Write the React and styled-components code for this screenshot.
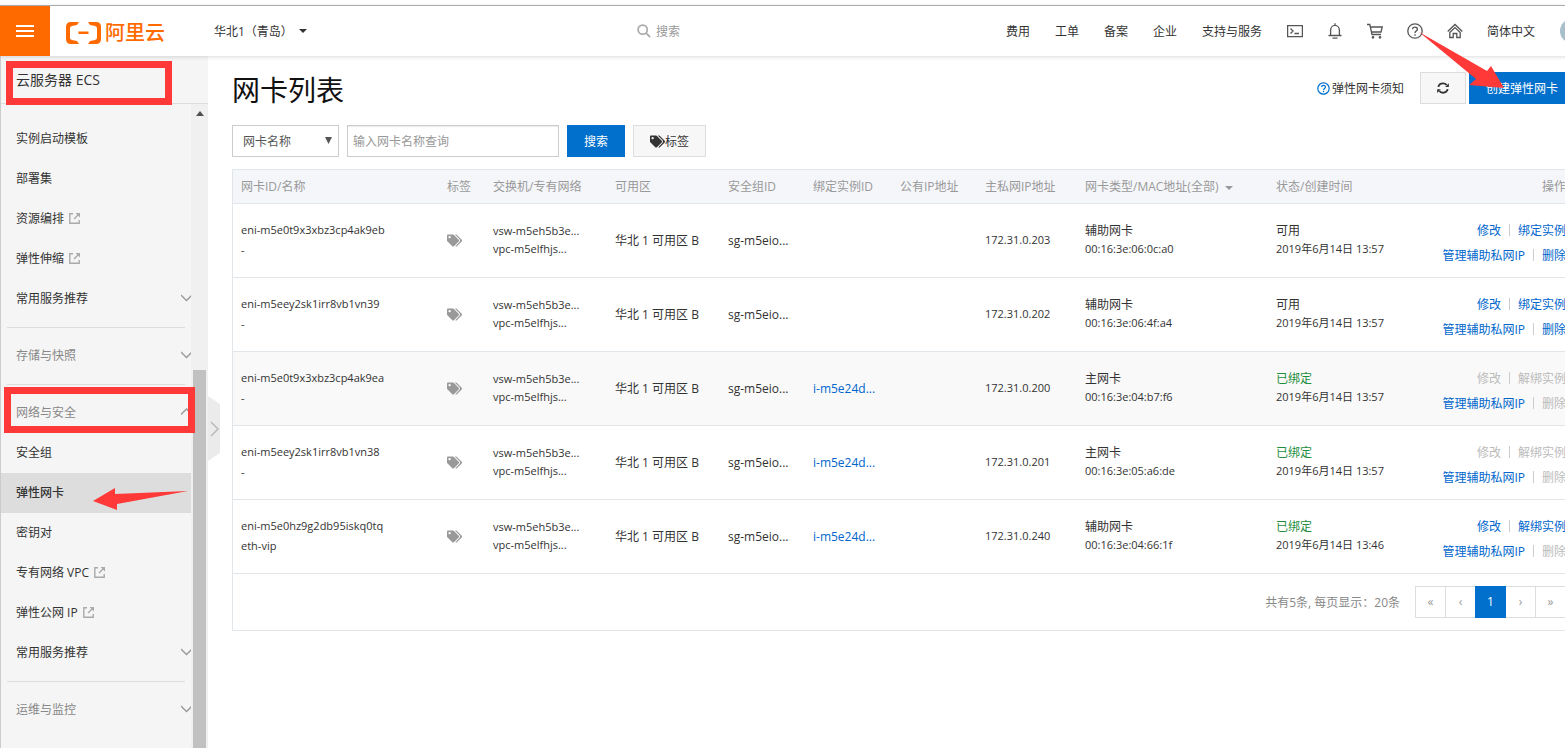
import React from "react";
import styled, { createGlobalStyle } from "styled-components";
import { FaTags } from "react-icons/fa";

const GlobalStyle = createGlobalStyle`
  * {
    box-sizing: border-box;
  }

  body {
    margin: 0;
    background: #ffffff;
    color: #333333;
    font-family: "Open Sans", "Noto Sans CJK SC", sans-serif;
    font-size: 12px;
    overflow: hidden;
  }

  button,
  input,
  select {
    font: inherit;
    color: inherit;
  }

  a {
    color: inherit;
    text-decoration: none;
  }
`;

const Page = styled("div")`
  position: relative;
  display: flex;
  flex-direction: column;
  width: calc(100vw + 34px);
  height: 100vh;
  padding-top: 5px;
  overflow: hidden;
`;

const TopBar = styled("header")`
  display: flex;
  align-items: center;
  flex-shrink: 0;
  position: relative;
  z-index: 2;
  height: 51px;
  padding-right: 15px;
  background: #ffffff;
  border-top: 1px solid #aaaaaa;
  box-shadow: 0 1px 4px rgba(0, 0, 0, 0.14);
`;

const MenuButton = styled("button")`
  display: flex;
  flex-direction: column;
  align-items: center;
  justify-content: center;
  gap: 3px;
  width: 50px;
  height: 50px;
  border: 0;
  background: #ff6a00;

  span {
    width: 18px;
    height: 2px;
    background: #ffffff;
  }
`;

const Logo = styled("a")`
  display: flex;
  align-items: center;
  gap: 3px;
  width: 148px;
  margin-left: 16px;
  padding-top: 3px;
  color: #ff6a00;
  font-size: 20px;
  font-weight: 500;
  line-height: 24px;
`;

const RegionButton = styled("button")`
  display: flex;
  align-items: center;
  gap: 6px;
  padding: 0;
  border: 0;
  background: none;
`;

const Caret = styled("span")`
  display: inline-block;
  border: 4px solid transparent;
  border-top-color: currentColor;
  border-bottom: 0;
`;

const SearchBox = styled("label")`
  display: flex;
  flex: 1;
  align-items: center;
  gap: 5px;
  margin-left: 330px;
  color: #aaaaaa;

  input {
    width: 200px;
    padding: 0;
    border: 0;
    outline: none;
    background: none;
  }

  input::placeholder {
    color: #999999;
  }
`;

const TopNav = styled("nav")`
  display: flex;
  align-items: center;
  gap: 24px;
  white-space: nowrap;
`;

const NavLink = styled("a")`
  padding-right: 1px;
`;

const NavIcon = styled("a")`
  display: flex;
`;

const Avatar = styled("span")`
  width: 24px;
  height: 24px;
  border-radius: 50%;
  background: #a9bfc9;
`;

const Body = styled("div")`
  display: flex;
  flex: 1;
  min-height: 0;
`;

const Sidebar = styled("aside")`
  display: flex;
  flex-direction: column;
  flex-shrink: 0;
  position: relative;
  width: 208px;
  background: #f5f5f5;
  border-left: 1px solid #cccccc;
`;

const SidebarTitle = styled("h2")`
  flex-shrink: 0;
  height: 48px;
  margin: 0;
  padding-left: 15px;
  border-bottom: 1px solid #dddddd;
  font-size: 14px;
  font-weight: 400;
  line-height: 48px;
`;

const SidebarScroll = styled("div")`
  display: flex;
  flex: 1;
  min-height: 0;
`;

const Menu = styled("nav")`
  flex: 1;
  padding-top: 15px;
  overflow: hidden;
`;

const MenuItem = styled("a")`
  display: flex;
  align-items: center;
  gap: 5px;
  height: 40px;
  padding-left: 15px;
  padding-bottom: 2px;
  background: ${(props) => (props.$active ? "#dddddd" : "transparent")};
  color: ${(props) => (props.$group ? "#888888" : "#333333")};
  font-weight: ${(props) => (props.$active ? 500 : 400)};

  .arrow {
    margin-left: auto;
  }
`;

const MenuDivider = styled("hr")`
  height: 1px;
  margin: 8px 6px;
  border: 0;
  background: #dddddd;
`;

const ScrollTrack = styled("div")`
  display: flex;
  flex-direction: column;
  align-items: center;
  width: 17px;
  padding-top: 7px;
  background: #f0f0f0;
  color: #505050;
`;

const ScrollThumb = styled("div")`
  flex: 1;
  width: 13px;
  margin-top: 254px;
  background: #c1c1c1;
`;

const CollapseHandle = styled("button")`
  position: absolute;
  top: 340px;
  left: 207px;
  width: 12px;
  height: 65px;
  padding: 0;
  border: 0;
  background: none;

  svg {
    display: block;
  }
`;

const Main = styled("main")`
  flex: 1;
  min-width: 0;
  padding: 16px 24px;
`;

const TitleRow = styled("div")`
  display: flex;
  align-items: center;
  height: 32px;
  margin-bottom: 21px;

  h1 {
    margin: 0 auto 0 0;
    padding-top: 4px;
    color: #111111;
    font-size: 28px;
    font-weight: 400;
    line-height: 32px;
  }
`;

const TitleActions = styled("div")`
  display: flex;
  gap: 3px;
`;

const NoticeLink = styled("a")`
  display: flex;
  align-items: center;
  gap: 2px;
  margin-right: 16px;
`;

const Toolbar = styled("form")`
  display: flex;
  gap: 8px;
  margin-bottom: 12px;
`;

const Button = styled("button")`
  display: flex;
  align-items: center;
  justify-content: center;
  height: 32px;
  padding: 0 16px;
  border: 1px solid ${(props) => (props.$primary ? "#0070cc" : "#dddddd")};
  background: ${(props) => (props.$primary ? "#0070cc" : "#f7f7f7")};
  color: ${(props) => (props.$primary ? "#ffffff" : "#333333")};
  white-space: nowrap;
`;

const SelectWrap = styled("div")`
  position: relative;
  width: 107px;
  height: 32px;

  select {
    width: 100%;
    height: 32px;
    padding: 0 10px;
    border: 1px solid #cccccc;
    border-radius: 0;
    background: #ffffff;
    color: #555555;
    appearance: none;
  }

  svg {
    position: absolute;
    top: 12px;
    right: 7px;
    pointer-events: none;
  }
`;

const TextInput = styled("input")`
  width: 212px;
  height: 32px;
  padding: 0 5px;
  border: 1px solid #cccccc;
  box-shadow: inset 0 1px 1px rgba(0, 0, 0, 0.08);

  &::placeholder {
    color: #999999;
  }
`;

const Panel = styled("section")`
  border: 1px solid #e1e6eb;
`;

const Table = styled("table")`
  width: 100%;
  border-collapse: collapse;
  table-layout: fixed;
  white-space: nowrap;

  th,
  td {
    padding: 0 8px;
    border-bottom: 1px solid #e1e6eb;
    text-align: left;
    font-weight: 400;
  }

  th {
    height: 33px;
    background: #f5f6fa;
    color: #999999;
  }

  th:last-child,
  td:last-child {
    text-align: right;
  }

  th span {
    margin-left: 3px;
    vertical-align: middle;
  }

  td {
    height: 74px;
  }
`;

const Row = styled("tr")`
  background: ${(props) => (props.$hovered ? "#f9f9f9" : "#ffffff")};
`;

const Line = styled("div")`
  line-height: 18px;
  color: ${(props) => (props.$bound ? "#1e8e3e" : "#333333")};
`;

const Code = styled("div")`
  font-size: 11px;
  line-height: ${(props) => (props.$loose ? "20px" : "18px")};
`;

const TableLink = styled("a")`
  color: #0066cc;
`;

const TagIcon = styled(FaTags)`
  display: block;
  color: #999999;
`;

const ActionList = styled("div")`
  padding-top: 4px;
`;

const Actions = styled("div")`
  display: flex;
  justify-content: flex-end;
  align-items: center;
  height: 25px;

  a + a {
    display: flex;
    align-items: center;
  }

  a + a::before {
    content: "";
    width: 1px;
    height: 12px;
    margin: 0 8px;
    background: #cccccc;
  }
`;

const Action = styled("a")`
  color: ${(props) => (props.$disabled ? "#bbbbbb" : "#0066cc")};
`;

const Footer = styled("div")`
  display: flex;
  align-items: center;
  justify-content: flex-end;
  gap: 15px;
  padding: 12px 8px;
  color: #888888;
`;

const Pager = styled("div")`
  display: flex;

  button + button {
    margin-left: -1px;
  }
`;

const PageButton = styled("button")`
  position: relative;
  z-index: ${(props) => (props.$current ? 1 : 0)};
  width: 31px;
  height: 32px;
  padding: 0;
  border: 1px solid ${(props) => (props.$current ? "#0070cc" : "#dddddd")};
  background: ${(props) => (props.$current ? "#0070cc" : "#ffffff")};
  color: ${(props) => (props.$current ? "#ffffff" : "#999999")};
`;

const Highlight = styled("div")`
  position: absolute;
  z-index: 3;
  top: ${(props) => props.$top}px;
  left: ${(props) => props.$left}px;
  width: ${(props) => props.$width}px;
  height: ${(props) => props.$height}px;
  border: 7px solid #ff3838;
  pointer-events: none;
`;

const Pointer = styled("svg")`
  position: absolute;
  z-index: 3;
  top: ${(props) => props.$top}px;
  left: ${(props) => props.$left}px;
  fill: #ff3838;
  pointer-events: none;
`;

const menu = [
  { label: "实例启动模板" },
  { label: "部署集" },
  { label: "资源编排", external: true },
  { label: "弹性伸缩", external: true },
  { label: "常用服务推荐", arrow: "down" },
  { divider: true },
  { label: "存储与快照", arrow: "down", group: true },
  { divider: true },
  { label: "网络与安全", arrow: "up", group: true },
  { label: "安全组" },
  { label: "弹性网卡", active: true },
  { label: "密钥对" },
  { label: "专有网络 VPC", external: true },
  { label: "弹性公网 IP", external: true },
  { label: "常用服务推荐", arrow: "down" },
  { divider: true },
  { label: "运维与监控", arrow: "down", group: true },
];

const columns = [
  { label: "网卡ID/名称", width: 206 },
  { label: "标签", width: 46 },
  { label: "交换机/专有网络", width: 122 },
  { label: "可用区", width: 113 },
  { label: "安全组ID", width: 85 },
  { label: "绑定实例ID", width: 87 },
  { label: "公有IP地址", width: 85 },
  { label: "主私网IP地址", width: 100 },
  { label: "网卡类型/MAC地址(全部)", width: 191, filter: true },
  { label: "状态/创建时间", width: 190 },
  { label: "操作" },
];

const rows = [
  {
    id: "eni-m5e0t9x3xbz3cp4ak9eb",
    name: "-",
    ip: "172.31.0.203",
    type: "辅助网卡",
    mac: "00:16:3e:06:0c:a0",
    time: "2019年6月14日 13:57",
    editable: true,
    deletable: true,
  },
  {
    id: "eni-m5eey2sk1irr8vb1vn39",
    name: "-",
    ip: "172.31.0.202",
    type: "辅助网卡",
    mac: "00:16:3e:06:4f:a4",
    time: "2019年6月14日 13:57",
    editable: true,
    deletable: true,
  },
  {
    id: "eni-m5e0t9x3xbz3cp4ak9ea",
    name: "-",
    instance: "i-m5e24d...",
    ip: "172.31.0.200",
    type: "主网卡",
    mac: "00:16:3e:04:b7:f6",
    time: "2019年6月14日 13:57",
    hovered: true,
  },
  {
    id: "eni-m5eey2sk1irr8vb1vn38",
    name: "-",
    instance: "i-m5e24d...",
    ip: "172.31.0.201",
    type: "主网卡",
    mac: "00:16:3e:05:a6:de",
    time: "2019年6月14日 13:57",
  },
  {
    id: "eni-m5e0hz9g2db95iskq0tq",
    name: "eth-vip",
    instance: "i-m5e24d...",
    ip: "172.31.0.240",
    type: "辅助网卡",
    mac: "00:16:3e:04:66:1f",
    time: "2019年6月14日 13:46",
    editable: true,
  },
];

function Icon({ size = 16, children, ...rest }) {
  return (
    <svg
      width={size}
      height={size}
      viewBox="0 0 16 16"
      fill="none"
      stroke="#555555"
      strokeWidth="1.3"
      {...rest}
    >
      {children}
    </svg>
  );
}

function ExternalIcon() {
  return (
    <svg width="11" height="11" viewBox="0 0 11 11" fill="none" stroke="#aaaaaa">
      <path d="M4 .8H.8v9.400h9.400V7M10 1L5 6" strokeWidth="1.400" />
      <path d="M6.500 0H11v4.500z" fill="#aaaaaa" stroke="none" />
    </svg>
  );
}

function MenuArrow({ direction }) {
  return (
    <svg
      className="arrow"
      width="10"
      height="8"
      viewBox="0 0 10 8"
      fill="none"
      stroke="#999999"
      strokeWidth="1.300"
    >
      <path d={direction === "up" ? "M0 6.5L5.5 1 11 6.5" : "M0 1L5.5 6.5 11 1"} />
    </svg>
  );
}

function Header() {
  return (
    <TopBar>
      <MenuButton aria-label="菜单">
        <span />
        <span />
        <span />
      </MenuButton>
      <Logo href="#">
        <svg width="36" height="22" viewBox="0 0 36 22" fill="#ff6a00">
          <path d="M13 0H5Q0 0 0 5v12q0 5 5 5h8l-2-3-5-1q-2-.4-2-2V6q0-1.600 2-2l5-1z" />
          <path d="M22 0h8q5 0 5 5v12q0 5-5 5h-8l2-3 5-1q2-.4 2-2V6q0-1.600-2-2l-5-1z" />
          <path d="M12.500 9.500h10v2.500h-10z" />
        </svg>
        阿里云
      </Logo>
      <RegionButton>
        华北1（青岛）
        <Caret />
      </RegionButton>
      <SearchBox>
        <Icon size={14} stroke="#aaaaaa" strokeWidth="2">
          <circle cx="6.5" cy="6.5" r="5.2" />
          <path d="M10.500 10.500l4.500 4.500" />
        </Icon>
        <input type="text" placeholder="搜索" aria-label="搜索" />
      </SearchBox>
      <TopNav>
        <NavLink href="#">费用</NavLink>
        <NavLink href="#">工单</NavLink>
        <NavLink href="#">备案</NavLink>
        <NavLink href="#">企业</NavLink>
        <NavLink href="#">支持与服务</NavLink>
        <NavIcon href="#" aria-label="命令行">
          <Icon>
            <path d="M.6 2.600h14.800v11H.6zM3.500 5.500L6 8l-2.500 2.500M7.500 10.500H12" />
          </Icon>
        </NavIcon>
        <NavIcon href="#" aria-label="消息">
          <Icon>
            <path d="M8 .2v2M3.600 12V7.500C3.600 4.500 5.500 2.400 8 2.400s4.400 2.100 4.400 5.100V12M1.500 12.500h13M5.500 15.200h5" />
          </Icon>
        </NavIcon>
        <NavIcon href="#" aria-label="购物车">
          <Icon>
            <path d="M0 1.500h2.800L5 11.500h9M3.500 4h11.700l-1.200 5H4.500" />
            <circle cx="6" cy="14.300" r=".7" />
            <circle cx="13" cy="14.300" r=".7" />
          </Icon>
        </NavIcon>
        <NavIcon href="#" aria-label="帮助">
          <Icon>
            <circle cx="8" cy="8" r="7.200" />
            <path d="M5.600 6.300C5.600 3.200 10.400 3.400 10.400 6.200 10.400 8 8 7.800 8 10M8 11.200v1.500" />
          </Icon>
        </NavIcon>
        <NavIcon href="#" aria-label="首页">
          <Icon>
            <path d="M.7 8.500L8 1.500l7.300 7M2.800 9.200v5.300h3.400V10.500h3.600v4h3.400V9.200M2.800 9.500L8 4.600l5.200 4.900" />
          </Icon>
        </NavIcon>
        <NavLink href="#">简体中文</NavLink>
        <Avatar />
      </TopNav>
    </TopBar>
  );
}

function SideMenu() {
  return (
    <Sidebar>
      <SidebarTitle>云服务器 ECS</SidebarTitle>
      <SidebarScroll>
        <Menu>
          {menu.map((item, index) =>
            item.divider ? (
              <MenuDivider key={index} />
            ) : (
              <MenuItem
                key={index}
                href="#"
                $active={item.active}
                $group={item.group}
              >
                {item.label}
                {item.external && <ExternalIcon />}
                {item.arrow && <MenuArrow direction={item.arrow} />}
              </MenuItem>
            )
          )}
        </Menu>
        <ScrollTrack>
          <svg width="8" height="5" viewBox="0 0 8 5" fill="currentColor">
            <path d="M4 0l4 5H0z" />
          </svg>
          <ScrollThumb />
        </ScrollTrack>
      </SidebarScroll>
      <CollapseHandle aria-label="收起">
        <svg width="12" height="65" viewBox="0 0 12 65" fill="none">
          <path d="M0 0l12 8v49L0 65z" fill="#ebebeb" />
          <path d="M3 26l7 7-7 7" stroke="#bbbbbb" strokeWidth="1.500" />
        </svg>
      </CollapseHandle>
    </Sidebar>
  );
}

function InterfaceRow({ item }) {
  return (
    <Row $hovered={item.hovered}>
      <td>
        <Code $loose>{item.id}</Code>
        <Code $loose>{item.name}</Code>
      </td>
      <td>
        <TagIcon size={15} />
      </td>
      <td>
        <Code>vsw-m5eh5b3e...</Code>
        <Code>vpc-m5elfhjs...</Code>
      </td>
      <td>华北 1 可用区 B</td>
      <td>sg-m5eio...</td>
      <td>{item.instance && <TableLink href="#">{item.instance}</TableLink>}</td>
      <td />
      <td>
        <Code>{item.ip}</Code>
      </td>
      <td>
        <Line>{item.type}</Line>
        <Code>{item.mac}</Code>
      </td>
      <td>
        <Line $bound={item.instance}>{item.instance ? "已绑定" : "可用"}</Line>
        <Code>{item.time}</Code>
      </td>
      <td>
        <ActionList>
          <Actions>
            <Action href="#" $disabled={!item.editable}>
              修改
            </Action>
            <Action href="#" $disabled={!item.editable}>
              {item.instance ? "解绑实例" : "绑定实例"}
            </Action>
          </Actions>
          <Actions>
            <Action href="#">管理辅助私网IP</Action>
            <Action href="#" $disabled={!item.deletable}>
              删除
            </Action>
          </Actions>
        </ActionList>
      </td>
    </Row>
  );
}

function App() {
  return (
    <>
      <GlobalStyle />
      <Page>
        <Header />
        <Body>
          <SideMenu />
          <Main>
            <TitleRow>
              <h1>网卡列表</h1>
              <NoticeLink href="#">
                <Icon size={13} stroke="#0070cc" strokeWidth="1.500">
                  <circle cx="8" cy="8" r="7" />
                  <path d="M5.600 6.300C5.600 3.200 10.400 3.400 10.400 6.200 10.400 8 8 7.800 8 10M8 11.200v1.500" />
                </Icon>
                弹性网卡须知
              </NoticeLink>
              <TitleActions>
                <Button aria-label="刷新">
                  <Icon size={12} stroke="#333333" strokeWidth="2.600">
                    <path d="M1.800 6.500C2.500 3.500 5 1.800 8 1.800c2 0 3.800.8 4.800 2.200M14.200 9.500c-.7 3-3.200 4.700-6.200 4.700-2 0-3.800-.8-4.800-2.200" />
                    <path d="M15.800 1.500v5h-5zM.2 14.500v-5h5z" fill="#333333" stroke="none" />
                  </Icon>
                </Button>
                <Button $primary>创建弹性网卡</Button>
              </TitleActions>
            </TitleRow>
            <Toolbar onSubmit={(event) => event.preventDefault()}>
              <SelectWrap>
                <select aria-label="查询字段">
                  <option>网卡名称</option>
                </select>
                <svg width="7" height="7" viewBox="0 0 7 7" fill="#555555">
                  <path d="M0 0h7L3.500 7z" />
                </svg>
              </SelectWrap>
              <TextInput
                type="text"
                placeholder="输入网卡名称查询"
                aria-label="输入网卡名称查询"
              />
              <Button type="submit" $primary>
                搜索
              </Button>
              <Button type="button">
                <FaTags size={15} />
                标签
              </Button>
            </Toolbar>
            <Panel>
              <Table>
                <colgroup>
                  {columns.map((column) => (
                    <col key={column.label} width={column.width} />
                  ))}
                </colgroup>
                <thead>
                  <tr>
                    {columns.map((column) => (
                      <th key={column.label}>
                        {column.label} {column.filter && <Caret />}
                      </th>
                    ))}
                  </tr>
                </thead>
                <tbody>
                  {rows.map((item) => (
                    <InterfaceRow key={item.id} item={item} />
                  ))}
                </tbody>
              </Table>
              <Footer>
                <span>共有5条, 每页显示：20条</span>
                <Pager>
                  <PageButton>«</PageButton>
                  <PageButton>‹</PageButton>
                  <PageButton $current>1</PageButton>
                  <PageButton>›</PageButton>
                  <PageButton>»</PageButton>
                </Pager>
              </Footer>
            </Panel>
          </Main>
        </Body>
        <Highlight $top={61} $left={6} $width={166} $height={44} />
        <Highlight $top={387} $left={4} $width={191} $height={46} />
        <Pointer $top={487} $left={92} width="98" height="24" viewBox="92 487 98 24">
          <path d="M93 501L115 488v6L188 491 117 504v6z" />
        </Pointer>
        <Pointer $top={30} $left={1418} width="88" height="60" viewBox="1418 30 88 60">
          <path d="M1419 32L1487 71l4-5 13 22-35-3 7-6z" />
        </Pointer>
      </Page>
    </>
  );
}

export default App;
